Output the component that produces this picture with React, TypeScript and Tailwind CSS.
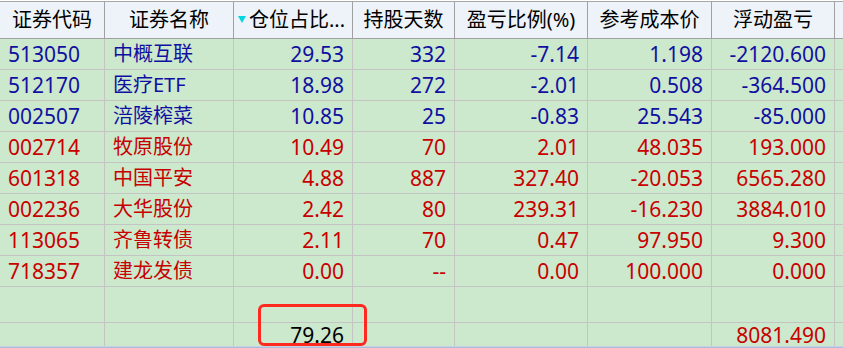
const cols = 'grid grid-cols-[105px_129px_119px_102px_133px_124px_123px_1fr]'

type Row = { code: string; name: string; pct: string; days: string; ratio: string; cost: string; pnl: string; up: boolean }

const rows: Row[] = [
  { code: '513050', name: '中概互联', pct: '29.53', days: '332', ratio: '-7.14', cost: '1.198', pnl: '-2120.600', up: false },
  { code: '512170', name: '医疗ETF', pct: '18.98', days: '272', ratio: '-2.01', cost: '0.508', pnl: '-364.500', up: false },
  { code: '002507', name: '涪陵榨菜', pct: '10.85', days: '25', ratio: '-0.83', cost: '25.543', pnl: '-85.000', up: false },
  { code: '002714', name: '牧原股份', pct: '10.49', days: '70', ratio: '2.01', cost: '48.035', pnl: '193.000', up: true },
  { code: '601318', name: '中国平安', pct: '4.88', days: '887', ratio: '327.40', cost: '-20.053', pnl: '6565.280', up: true },
  { code: '002236', name: '大华股份', pct: '2.42', days: '80', ratio: '239.31', cost: '-16.230', pnl: '3884.010', up: true },
  { code: '113065', name: '齐鲁转债', pct: '2.11', days: '70', ratio: '0.47', cost: '97.950', pnl: '9.300', up: true },
  { code: '718357', name: '建龙发债', pct: '0.00', days: '--', ratio: '0.00', cost: '100.000', pnl: '0.000', up: true },
]

const headers = ['证券代码', '证券名称', '仓位占比...', '持股天数', '盈亏比例(%)', '参考成本价', '浮动盈亏']

function Cell({ children, left, className = '' }: { children?: React.ReactNode; left?: boolean; className?: string }) {
  return (
    <div
      className={`flex items-center border-r border-b border-[#c4c4c4] ${left ? 'justify-start pl-[8px]' : 'justify-end pr-[8px]'} ${className}`}
    >
      {children}
    </div>
  )
}

export default function App() {
  return (
    <div
      className="h-[348px] w-[843px] overflow-hidden bg-white text-[20px] leading-none"
      style={{ fontFamily: '"Noto Sans", "Noto Sans CJK SC", sans-serif' }}
    >
      <div className="pt-[1px]">
        <div className={`${cols} h-[38px] border-t border-[#a8a8a8] bg-[#edf3f8] text-black`}>
          {headers.map((h, i) => (
            <div
              key={h}
              className={`flex items-center border-r border-b border-[#a0a0a0] ${i === 2 ? 'justify-start pl-[4px]' : 'justify-center'}`}
            >
              {i === 2 && (
                <svg width="8" height="7" viewBox="0 0 8 7" className="mr-[3px] mt-[-2px]">
                  <polygon points="0,0 8,0 4,7" fill="#00d8e0" />
                </svg>
              )}
              <span className="whitespace-nowrap">{h}</span>
            </div>
          ))}
          <div className="border-b border-[#a0a0a0]" />
        </div>
      </div>

      <div className="bg-[#cce8cd]">
        {rows.map((r) => (
          <div key={r.code} className={`${cols} h-[31px] ${r.up ? 'text-[#c80000]' : 'text-[#1010a0]'}`}>
            <Cell left className="text-[21px]">{r.code}</Cell>
            <Cell left>{r.name}</Cell>
            <Cell className="text-[21px]">{r.pct}</Cell>
            <Cell className="text-[21px]">{r.days}</Cell>
            <Cell className="text-[21px]">{r.ratio}</Cell>
            <Cell className="text-[21px]">{r.cost}</Cell>
            <Cell className="text-[21px]">{r.pnl}</Cell>
            <div className="border-b border-[#c4c4c4]" />
          </div>
        ))}

        <div className={`${cols} h-[36px]`}>
          <Cell />
          <Cell />
          <Cell />
          <Cell />
          <Cell />
          <Cell />
          <Cell />
          <div className="border-b border-[#c4c4c4]" />
        </div>

        <div className={`${cols} h-[23px] text-[21px]`}>
          <Cell className="border-b-0" />
          <Cell className="border-b-0" />
          <div className="relative flex items-center justify-end border-r border-[#c4c4c4] pr-[8px] pt-[1px] text-black">
            79.26
            <div className="absolute left-[24px] top-[-19px] h-[42px] w-[109px] rounded-[6px] border-[3px] border-[#ff2a1f]" />
          </div>
          <Cell className="border-b-0" />
          <Cell className="border-b-0" />
          <Cell className="border-b-0" />
          <Cell className="border-b-0 pt-[1px] text-[#c80000]">8081.490</Cell>
          <div />
        </div>
      </div>
      <div className="h-[1px] bg-[#c8d2e2]" />
      <div className="h-[2px] bg-[#a9bcdc]" />
    </div>
  )
}
